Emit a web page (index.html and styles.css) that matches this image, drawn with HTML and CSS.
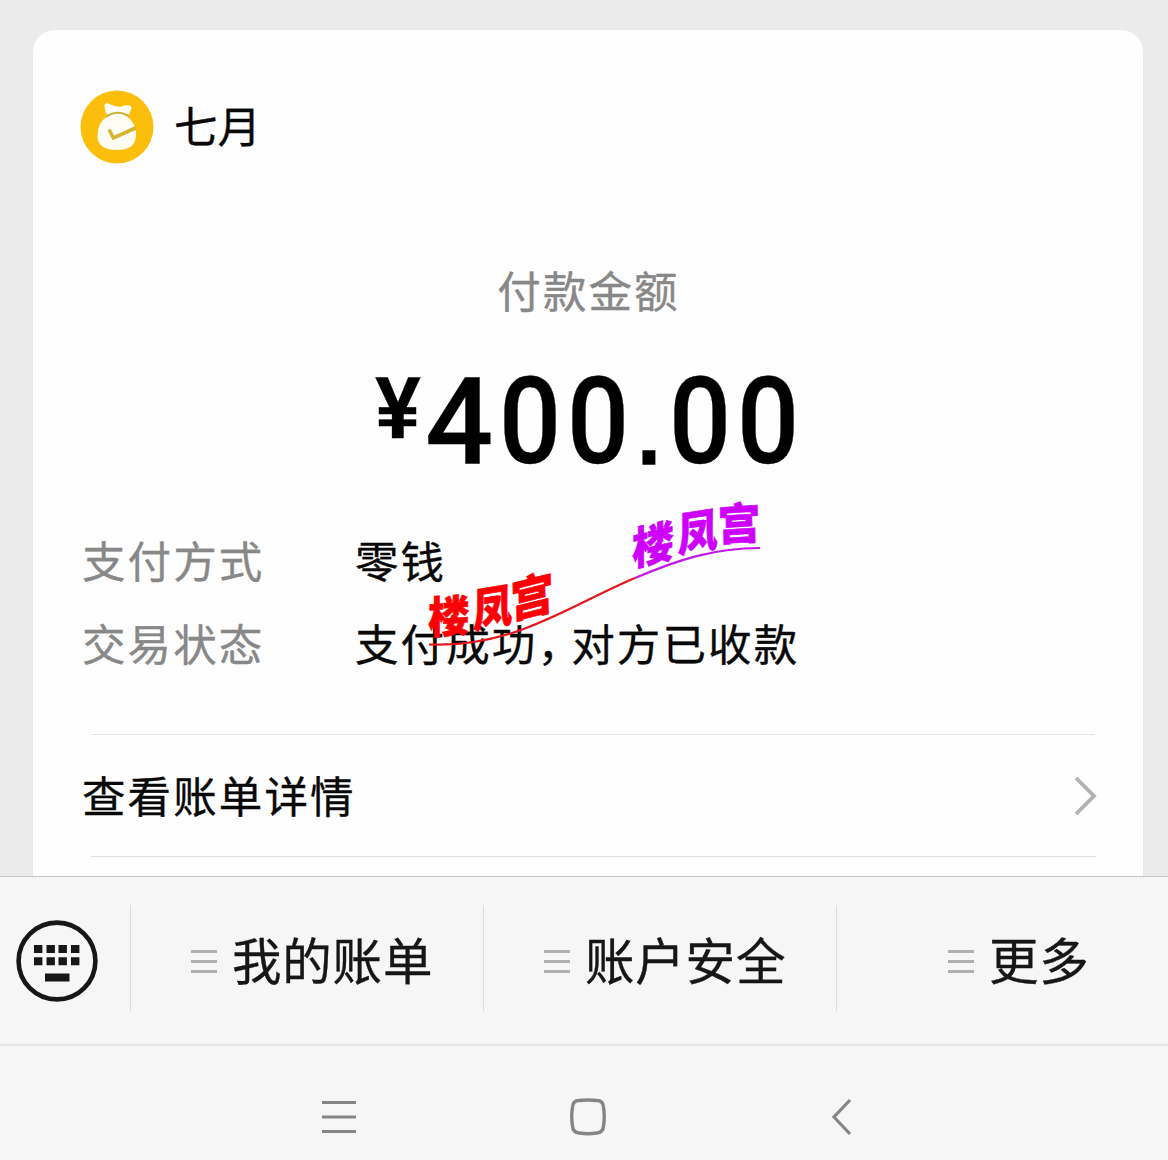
FILE: index.html
```html
<!DOCTYPE html>
<html lang="zh-CN">
<head>
<meta charset="utf-8">
<title>七月</title>
<link rel="stylesheet" href="styles.css">
</head>
<body>
<div class="screen">
  <main class="chat">
    <section class="card">
      <header class="payee">
        <svg class="avatar" viewBox="0 0 74 74">
          <circle cx="37" cy="37" r="36.500" fill="#fbbf0b"/>
          <path d="M24.500 16q0-3.500 4-2.500q8 4 13 3q4-2 8-1q3 1 1.500 4q-2 4-1.500 5q-6 0-8-1q-8-1.500-13.500 2q-3-3-3.500-9.500z" fill="#fffef5"/>
          <path d="M24 29C32 21 42 21 50 29C54 34 56 38 56 44C56 55 50 60 37 60C24 60 17.500 55 17.500 46C17.500 38 20 33 24 29Z" fill="#fffef5"/>
          <path d="M26 27Q37 19 49 26" fill="none" stroke="#c9b23a" stroke-width="2"/>
          <path d="M29 39.500l4.500 8.500l22-10" fill="none" stroke="#d5b530" stroke-width="3.600"/>
        </svg>
        <span class="payee-name">七月</span>
      </header>
      <div class="caption">付款金额</div>
      <div class="amount"><span class="currency">¥</span><span class="figure"><b class="four">4</b><b>0</b><b>0</b><b class="dot">.</b><b>0</b><b>0</b></span></div>
      <dl class="details">
        <div class="row"><dt>支付方式</dt><dd>零钱</dd></div>
        <div class="row"><dt>交易状态</dt><dd>支付成功<span class="comma">，</span>对方已收款</dd></div>
      </dl>
      <div class="bill-link">
        <span>查看账单详情</span>
        <svg class="chevron" width="26" height="42" viewBox="0 0 26 42"><path d="M4 3L22 21L4 39" fill="none" stroke="#b2b2b2" stroke-width="3.800"/></svg>
      </div>
    </section>
    <svg class="stamp" viewBox="0 0 350 160">
      <path d="M19 154.500C105 158 160 115 225 88" class="line red"/>
      <path d="M225 88C270 69 305 58 350 58" class="line violet"/>
      <g class="mark red">
        <text transform="matrix(.96 -.06 0 1.020 18 144)">楼</text>
        <text transform="matrix(.91 -.15 0 1.060 63 138)">凤</text>
        <text transform="matrix(1 -.25 .03 1.080 101 129)">宫</text>
      </g>
      <g class="mark violet">
        <text transform="matrix(.97 -.22 0 1.040 222 76)">楼</text>
        <text transform="matrix(.92 -.14 0 1.060 268 62)">凤</text>
        <text transform="matrix(.99 -.06 .02 1.020 308 51)">宫</text>
      </g>
    </svg>
  </main>
  <nav class="menu">
    <div class="keyboard">
      <svg width="82" height="82" viewBox="0 0 82 82">
        <circle cx="41" cy="41" r="38.400" fill="none" stroke="#171717" stroke-width="4.600"/>
        <path fill="#171717" d="M18 25h8.400v8H18zM30.500 25h8.400v8h-8.400zM42.500 25h8.400v8h-8.400zM55 25h8.400v8H55zM18 37.200h8.400v8H18zM30.500 37.200h8.400v8h-8.400zM42.500 37.200h8.400v8h-8.400zM55 37.200h8.400v8H55zM29 53.500h24.500v8H29z"/>
      </svg>
    </div>
    <div class="item"><i class="bars"></i><span>我的账单</span></div>
    <div class="item"><i class="bars"></i><span>账户安全</span></div>
    <div class="item last"><i class="bars"></i><span>更多</span></div>
  </nav>
  <footer class="system">
    <svg width="36" height="38" viewBox="0 0 36 38"><path d="M1 4.500H35M1 19H35M1 33.500H35" stroke="#858585" stroke-width="3"/></svg>
    <svg width="36" height="38" viewBox="0 0 36 38"><path d="M9 2.500Q18 1.500 27 2.500Q33 2.500 33.500 9Q35 19 33.500 28Q33 34.500 27 35Q18 36.500 9 35Q3 34.500 2.500 28Q1 19 2.500 9Q3 2.500 9 2.500Z" fill="none" stroke="#858585" stroke-width="3.400"/></svg>
    <svg width="22" height="38" viewBox="0 0 22 38"><path d="M19 2L3 19L19 36" fill="none" stroke="#858585" stroke-width="3.200"/></svg>
  </footer>
</div>
</body>
</html>
```
FILE: styles.css
```css
* { box-sizing: border-box; }
body {
  margin: 0;
  font-family: "Noto Sans CJK SC", sans-serif;
  color: #080808;
}
.screen {
  width: 1168px;
  height: 1160px;
  display: flex;
  flex-direction: column;
  background: #ebebeb;
  overflow: hidden;
}
.chat {
  position: relative;
  height: 876px;
  padding: 30px 25px 0 33px;
}
.card {
  height: 846px;
  padding: 59px 45px 0 49px;
  background: #fefefe;
  border-radius: 22px 22px 0 0;
  font-size: 43.500px;
  letter-spacing: 2.100px;
  line-height: 60px;
  -webkit-text-stroke: .35px currentColor;
}
.payee {
  display: flex;
  align-items: center;
  gap: 20px;
  height: 76px;
  margin-left: -2px;
}
.avatar { width: 74px; height: 74px; }
.payee-name { font-size: 43.500px; letter-spacing: 0; margin-bottom: 4px; }
.caption {
  margin-top: 95px;
  padding-right: 3px;
  text-align: center;
  color: #888;
}
.amount {
  display: flex;
  align-items: flex-start;
  height: 112px;
  margin-top: 46px;
  padding-left: 293px;
  font-family: Roboto, sans-serif;
  font-weight: 500;
  letter-spacing: 0;
  color: #000;
}
.currency { width: 50px; font-size: 86px; line-height: 86px; font-weight: 600; }
.figure { display: flex; font-size: 120px; line-height: 112px; }
.figure b {
  width: 68px;
  font-weight: 500;
  text-align: center;
  transform: scaleX(.91);
}
.figure .four { width: 71px; text-align: left; transform: none; }
.figure .dot {
  width: 34px;
  font-family: "Liberation Sans", sans-serif;
  font-weight: 400;
  -webkit-text-stroke: 1.500px #000;
  transform: none;
}
.details { margin: 52px 0 0; }
.row { display: flex; height: 82.500px; }
dt { width: 273px; color: #888; }
dd { margin: 0; white-space: nowrap; }
.comma { margin-right: 10px; font-feature-settings: "halt"; }
.bill-link {
  display: flex;
  align-items: center;
  justify-content: space-between;
  height: 124px;
  margin-top: 39px;
  background: linear-gradient(#e4e4e4, #e4e4e4) 9px 0 / 1003px 1px no-repeat,
              linear-gradient(#e0e0e0, #e0e0e0) 9px 122px / 1005px 1px no-repeat;
}
.bill-link span { margin-bottom: 2px; }
.stamp {
  position: absolute;
  left: 410px;
  top: 490px;
  width: 350px;
  height: 160px;
  overflow: visible;
}
.mark { font-size: 43px; font-weight: 900; stroke-width: .6; }
.mark.red { fill: #fc0006; stroke: #fc0006; }
.mark.violet { fill: #cc00fb; stroke: #cc00fb; }
.line { fill: none; stroke-width: 2.200; }
.line.red { stroke: #e6141c; }
.line.violet { stroke: #c217e6; }
.menu {
  display: flex;
  height: 168px;
  border-top: 1px solid #c6c6c6;
  background: #f6f6f6;
  color: #161616;
}
.keyboard {
  display: flex;
  align-items: center;
  width: 130px;
  padding-left: 16px;
}
.item {
  display: flex;
  align-items: center;
  width: 353px;
  padding: 0 0 0 61px;
  font-size: 49.500px;
  letter-spacing: .8px;
  line-height: 72px;
  background: linear-gradient(#dcdcdc, #dcdcdc) 0 28px / 1px 106px no-repeat;
  -webkit-text-stroke: .35px currentColor;
}
.item span { margin: 0 0 3px -2px; }
.item.last { padding-left: 112px; width: 332px; }
.bars {
  width: 26px;
  height: 24px;
  margin: 3px 17px 0 0;
  background: linear-gradient(#b0b0b0 3px, transparent 3px 10px, #b0b0b0 10px 13px, transparent 13px 20px, #b0b0b0 20px 23px, transparent 23px);
}
.system {
  display: flex;
  align-items: center;
  height: 116px;
  padding: 27px 0 0 321px;
  border-top: 2px solid #e5e5e5;
  background: #f6f6f6;
}
.system svg:nth-child(2) { margin-left: 213px; }
.system svg:nth-child(3) { margin-left: 225px; }
```
